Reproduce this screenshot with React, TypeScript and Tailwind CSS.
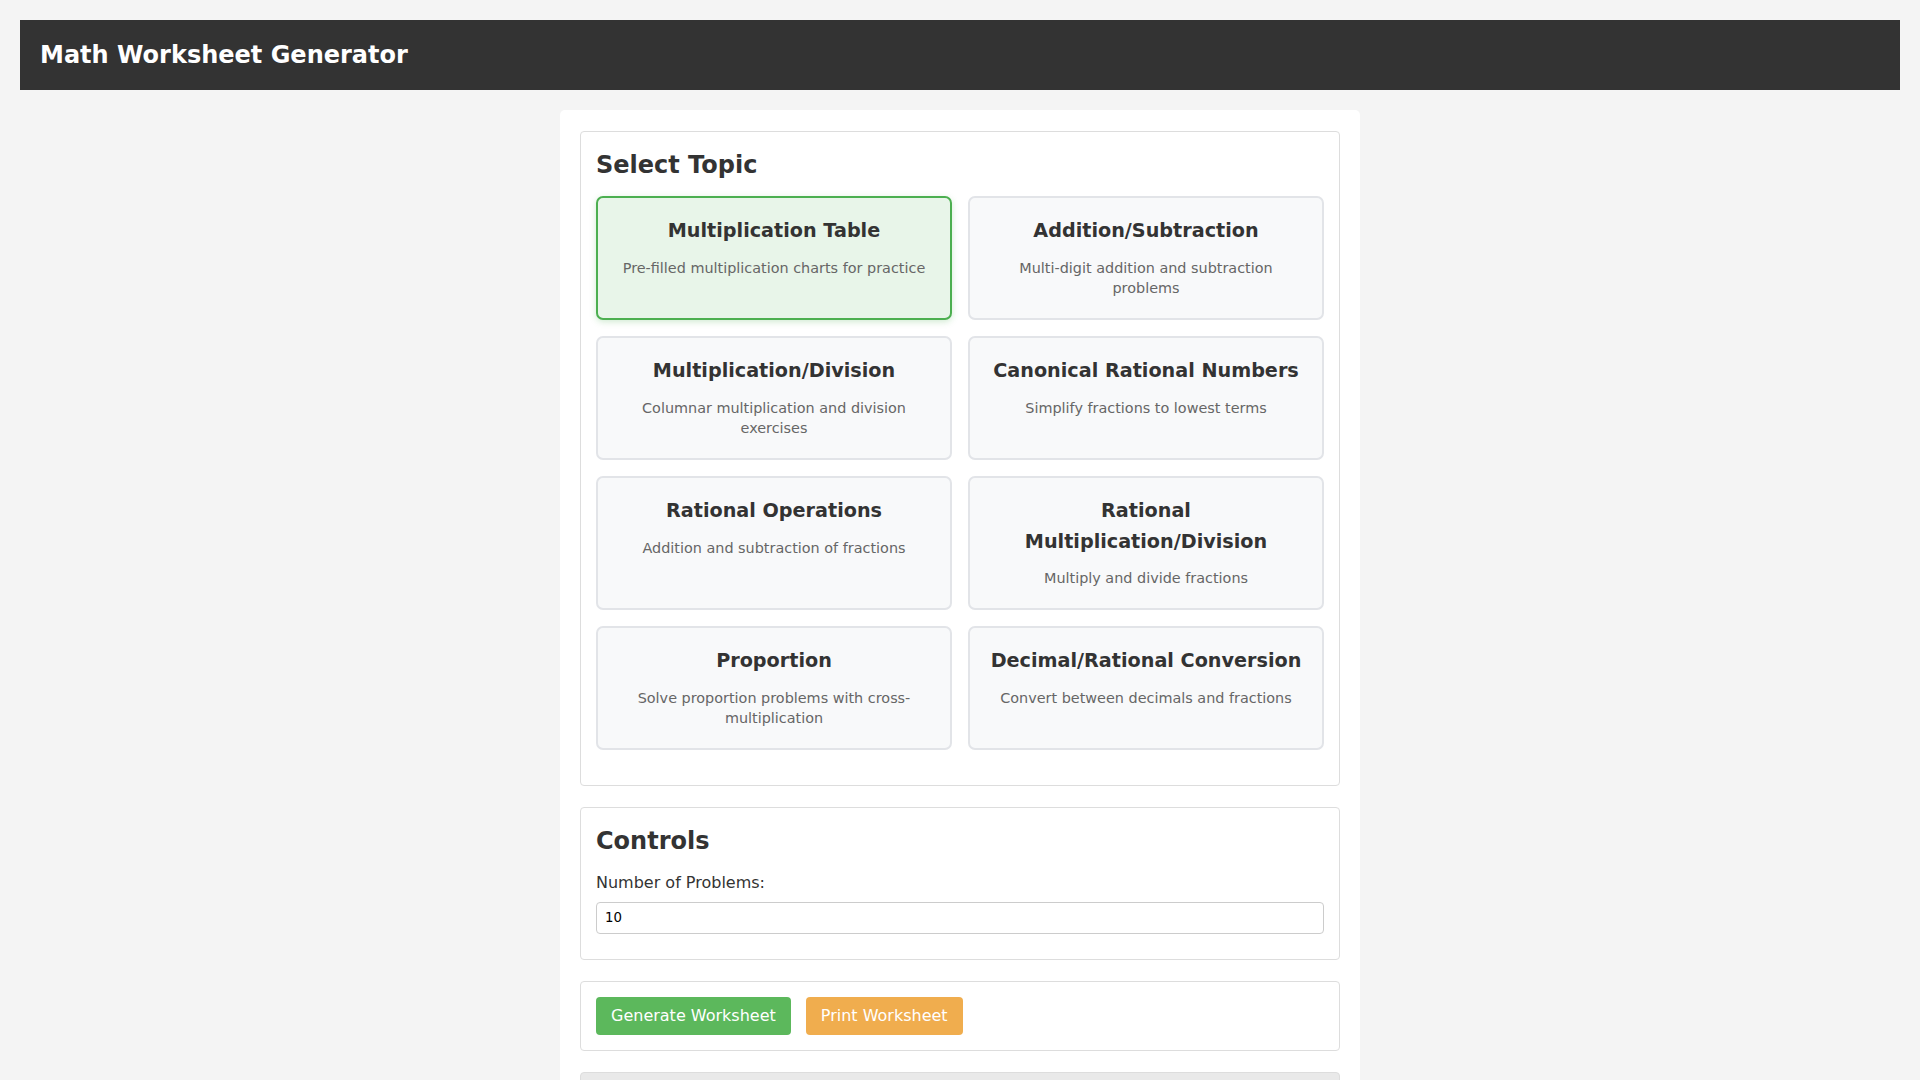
import React from "react";

const topics = [
  { title: "Multiplication Table", desc: "Pre-filled multiplication charts for practice", selected: true },
  { title: "Addition/Subtraction", desc: "Multi-digit addition and subtraction problems" },
  { title: "Multiplication/Division", desc: "Columnar multiplication and division exercises" },
  { title: "Canonical Rational Numbers", desc: "Simplify fractions to lowest terms" },
  { title: "Rational Operations", desc: "Addition and subtraction of fractions" },
  { title: "Rational Multiplication/Division", desc: "Multiply and divide fractions" },
  { title: "Proportion", desc: "Solve proportion problems with cross-multiplication" },
  { title: "Decimal/Rational Conversion", desc: "Convert between decimals and fractions" },
];

export default function App() {
  return (
    <div className="min-h-screen bg-[#f4f4f4] pt-[20px] font-['DejaVu_Sans',sans-serif] text-[#333]">
      <header className="mx-[20px] flex h-[70px] items-center bg-[#333333] px-[20px]">
        <h1 className="text-[24px] font-bold leading-[30px] text-white">Math Worksheet Generator</h1>
      </header>

      <main className="mx-auto mt-[20px] w-[800px] rounded-[5px] bg-white px-[20px] pt-[21px] pb-[20px]">
        <section className="rounded-[4px] border border-[#dddddd] bg-white px-[15px] pt-[15px] pb-[15px]">
          <h2 className="mb-[13px] text-[24px] font-bold leading-[36px] text-[#333]">Select Topic</h2>
          <div className="mb-[20px] grid grid-cols-2 gap-x-[16px] gap-y-[16.5px]">
            {topics.map((t) => (
              <div
                key={t.title}
                className={
                  t.selected
                    ? "rounded-[7px] border-2 border-[#4caf50] bg-[#e8f5e9] px-[20px] pt-[18px] pb-[19px] text-center shadow-[0_2px_6px_rgba(76,175,80,0.25)]"
                    : "rounded-[7px] border-2 border-[#e2e4e8] bg-[#f8f9fa] px-[20px] pt-[18px] pb-[19px] text-center"
                }
              >
                <h3 className="mb-[11px] text-[19.2px] font-bold leading-[30.5px] text-[#333]">{t.title}</h3>
                <p className="text-[14.4px] leading-[20.5px] text-[#666]">{t.desc}</p>
              </div>
            ))}
          </div>
        </section>

        <section className="mt-[21px] rounded-[4px] border border-[#dddddd] bg-white px-[15px] pt-[15px] pb-[15px]">
          <h2 className="mb-[12px] text-[24px] font-bold leading-[36px] text-[#333]">Controls</h2>
          <label className="mb-[7px] block text-[16px] leading-[24px] text-[#333]">Number of Problems:</label>
          <input
            type="number"
            defaultValue={10}
            className="mb-[10px] block h-[32px] w-full rounded-[4px] border border-[#cccccc] bg-white px-[8px] text-[13.3px] text-black outline-none"
          />
        </section>

        <section className="mt-[21px] flex gap-[15px] rounded-[4px] border border-[#dddddd] bg-white p-[15px]">
          <button className="h-[38px] rounded-[4px] bg-[#5cb85c] px-[15px] text-[16px] leading-[18px] text-white">
            Generate Worksheet
          </button>
          <button className="h-[38px] rounded-[4px] bg-[#f0ad4e] px-[15px] text-[16px] leading-[18px] text-white">
            Print Worksheet
          </button>
        </section>

        <section className="mt-[21px] h-[300px] rounded-[4px] border border-[#dddddd] bg-[#e9e9e9]"></section>
      </main>
    </div>
  );
}
